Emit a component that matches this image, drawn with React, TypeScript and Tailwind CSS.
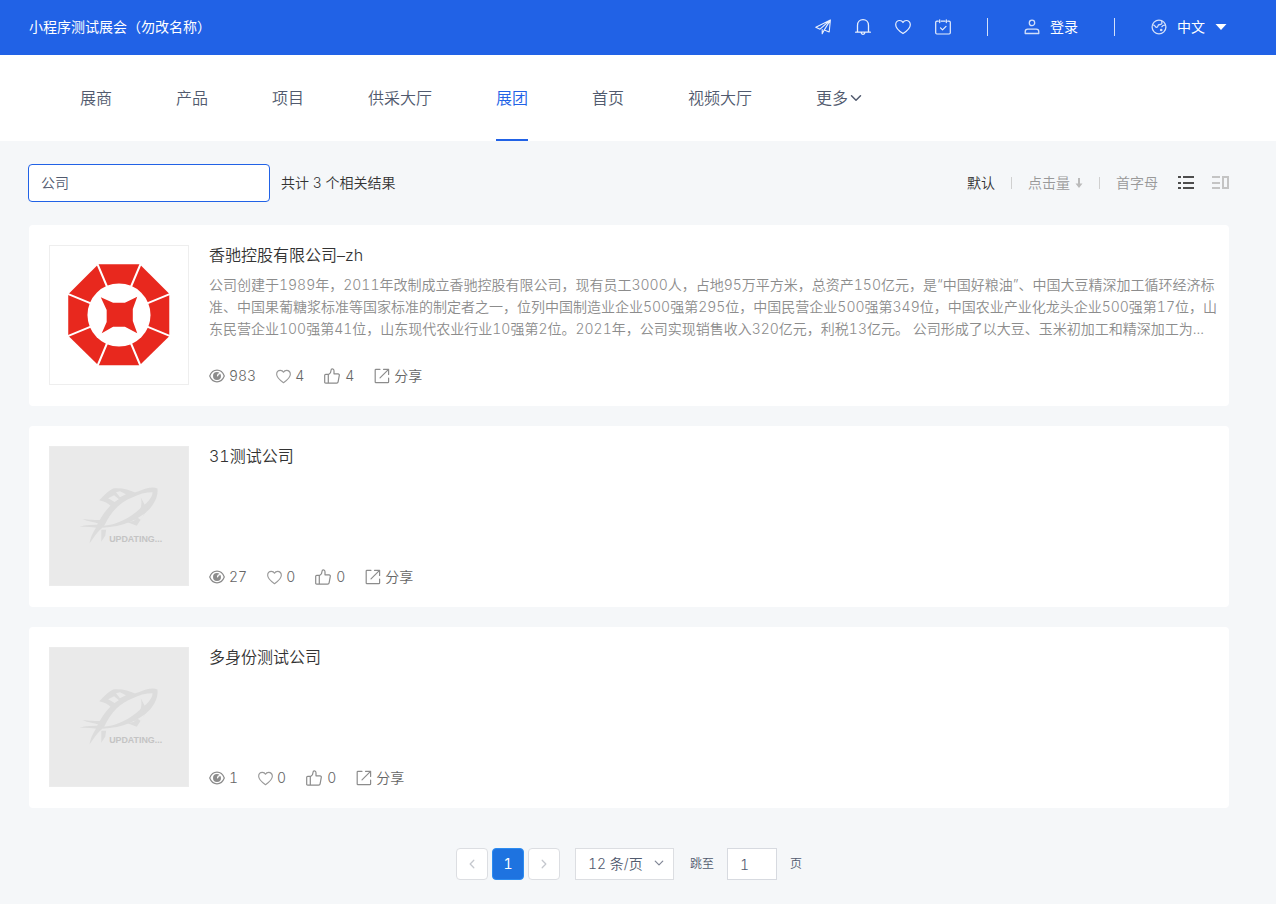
import React, { useState } from 'react';

interface Company {
  id: number;
  name: string;
  intro?: string;
  hasLogo?: boolean;
  views: number;
  favorites: number;
  likes: number;
}

const NAV_ITEMS = ['展商', '产品', '项目', '供采大厅', '展团', '首页', '视频大厅'];

const COMPANIES: Company[] = [
  {
    id: 1,
    name: '香驰控股有限公司–zh',
    intro:
      '公司创建于1989年，2011年改制成立香驰控股有限公司，现有员工3000人，占地95万平方米，总资产150亿元，是“中国好粮油”、中国大豆精深加工循环经济标准、中国果葡糖浆标准等国家标准的制定者之一，位列中国制造业企业500强第295位，中国民营企业500强第349位，中国农业产业化龙头企业500强第17位，山东民营企业100强第41位，山东现代农业行业10强第2位。2021年，公司实现销售收入320亿元，利税13亿元。 公司形成了以大豆、玉米初加工和精深加工为...',
    hasLogo: true,
    views: 983,
    favorites: 4,
    likes: 4,
  },
  { id: 2, name: '31测试公司', views: 27, favorites: 0, likes: 0 },
  { id: 3, name: '多身份测试公司', views: 1, favorites: 0, likes: 0 },
];

interface IconProps {
  className?: string;
}

const strokeProps = {
  fill: 'none',
  stroke: 'currentColor',
  strokeLinecap: 'round' as const,
  strokeLinejoin: 'round' as const,
};

const PlaneIcon: React.FC<IconProps> = ({ className }) => (
  <svg viewBox="0 0 16 16" className={className} {...strokeProps} strokeWidth="1.1">
    <path d="M15.4 1 0.8 8.3l4.2 1.9L15.4 1ZM15.4 1l-1.2 12-5-1.9L15.4 1M7.2 10.6v4.2l2-3.7" />
  </svg>
);

const BellIcon: React.FC<IconProps> = ({ className }) => (
  <svg viewBox="0 0 16 16" className={className} {...strokeProps} strokeWidth="1.3">
    <path d="M2.5 13.2V6.4C2.5 3 4.9 0.7 8 0.7s5.5 2.3 5.5 5.7v6.8M0.6 13.2h14.8M6.3 14c.3 1 .9 1.3 1.7 1.3s1.4-.3 1.7-1.3" />
  </svg>
);

const HeartIcon: React.FC<IconProps> = ({ className }) => (
  <svg viewBox="0 0 16 16" className={className} {...strokeProps} strokeWidth="1.2">
    <path d="M8 14.6C5.3 12.8 0.7 9.5 0.7 5.7 0.7 3.3 2.5 1.5 4.7 1.5c1.5 0 2.7.8 3.3 2 .6-1.2 1.8-2 3.3-2 2.2 0 4 1.8 4 4.2 0 3.8-4.6 7.1-7.3 8.9Z" />
  </svg>
);

const CalendarIcon: React.FC<IconProps> = ({ className }) => (
  <svg viewBox="0 0 16 16" className={className} {...strokeProps} strokeWidth="1.2">
    <path d="M3.3 2.2H1.9c-.7 0-1.2.5-1.2 1.2v10.4c0 .7.5 1.2 1.2 1.2h12.2c.7 0 1.2-.5 1.2-1.2V3.4c0-.7-.5-1.2-1.2-1.2h-1.4M6.3 2.2h3.6M4.7.8v2.8M11.3.8v2.8M5.5 8.8l2 2L11 7.3" />
  </svg>
);

const UserIcon: React.FC<IconProps> = ({ className }) => (
  <svg viewBox="0 0 16 16" className={className} {...strokeProps} strokeWidth="1.3">
    <circle cx="8" cy="3.9" r="2.7" />
    <path d="M1.2 14.5v-1.7c0-1.5 1-2.6 2.6-2.6h8.4c1.6 0 2.6 1.1 2.6 2.6v1.7H1.2Z" />
  </svg>
);

const GlobeIcon: React.FC<IconProps> = ({ className }) => (
  <svg viewBox="0 0 16 16" className={className} {...strokeProps} strokeWidth="1.3">
    <circle cx="8" cy="8" r="6.9" />
    <path d="M1.5 5.8c1.6 0 2.3.5 2.8 1.6.8 1.5 2.5 1.1 2.6-.4.1-1.2 1-1.5 2.2-1.5 1.7 0 2.2-1.1 1.6-2.8M14.5 6.2c-1.5-.2-2.9.3-3.6 1.5" />
    <circle cx="10.2" cy="11" r="1.3" fill="currentColor" stroke="none" />
  </svg>
);

const ChevronIcon: React.FC<IconProps> = ({ className }) => (
  <svg viewBox="0 0 12 12" className={className} {...strokeProps} strokeWidth="1.5">
    <path d="m1.5 3.8 4.5 4.4 4.5-4.4" />
  </svg>
);

const EyeIcon: React.FC<IconProps> = ({ className }) => (
  <svg viewBox="0 0 16 16" className={className} {...strokeProps} strokeWidth="1.2">
    <path d="M0.7 8C2.2 4.1 4.8 2.2 8 2.2S13.8 4.1 15.3 8c-1.5 3.9-4.1 5.8-7.3 5.8S2.2 11.9 0.7 8Z" />
    <path d="M8 4a4 4 0 1 0 4 4H9.5A1.5 1.5 0 0 1 8 6.5ZM8 4v2.5L9.5 8H12c0-2.2-1.8-4-4-4Z" fill="currentColor" stroke="none" />
    <path d="M8.6 7.8c.1-1.400.8-2 2-2.100" stroke="#fff" strokeWidth="1.3" />
  </svg>
);

const ThumbIcon: React.FC<IconProps> = ({ className }) => (
  <svg viewBox="0 0 16 16" className={className} {...strokeProps} strokeWidth="1.2">
    <path d="M4.3 15.2H1.7c-.6 0-1-.4-1-1V7.3c0-.6.4-1 1-1h2.6v8.9ZM4.3 6.3h.6C6.4 5.5 7 4.3 7 2.5 7 1.4 7.6.8 8.4.8c1 0 1.6.8 1.6 1.9V5.8h4c.9 0 1.5.7 1.3 1.6l-1.2 6.5c-.1.8-.7 1.3-1.5 1.3H4.3" />
  </svg>
);

const ShareIcon: React.FC<IconProps> = ({ className }) => (
  <svg viewBox="0 0 16 16" className={className} {...strokeProps} strokeWidth="1.2">
    <path d="M6 1.3H2c-.5 0-.8.3-.8.8v11.8c0 .5.3.8.8.8h11.8c.5 0 .8-.3.8-.8V10M9.5 1.3h5.1V6.4M14.3 1.6 6 9.9" />
  </svg>
);

// Octagonal brand mark with a star cut into the ring
const CompanyLogo: React.FC = () => (
  <svg viewBox="0 0 140 140" className="h-full w-full" role="img" aria-label="logo">
    <path d="M49 18.5h42l30 30v43l-30 29.5H49L18.5 91V49Z" fill="#e8281e" />
    <path d="M48 18 92 122M92 18 48 122M18 48.5 122 91.5M18 91.5 122 48.5" stroke="#fff" strokeWidth="2" />
    <circle cx="70" cy="70" r="32" fill="#fff" />
    <path d="M51.5 52 64 57.5h12l12.5-6L84 64v12L88.5 88.5 76 82H64L52.5 88.5 57.5 77V65Z" fill="#e8281e" />
  </svg>
);

const UpdatingImage: React.FC = () => (
  <svg viewBox="0 0 140 140" className="h-full w-full" role="img" aria-label="updating">
    <g fill="#dcdcdc">
      <path
        fillRule="evenodd"
        d="M40 98c1-6 3-10 6-15 4-9 9-18 18-26 8-6 17-9 26-12 7-3 14-5 19-3 1 8-3 15-8 21-11 11-27 18-48 19-5 4-8 9-13 16Zm15-18c13-1 26-8 36-17 7-6 13-11 13-17-7 0-14 2-20 5-13 5-22 14-29 29Z"
      />
      <path fillRule="evenodd" d="M50 54c5-5 8-9 14-12 8-1 16 1 24 5l-8 3-17 11c-4-4-8-6-13-7Zm9-2 7 4 4-3-5-4Zm12-1 6-3-6-3-4 1Z" />
      <path d="M92 51c2 7 0 13-4 20l4 3c3-5 6-9 5-14ZM101 60 88 80l-10-4 7-1 9-10Z" />
      <path d="M33 73c7 1 12 1 20 1l-2 4c-6-2-12-2-18-5ZM30 81c6-2 13-2 22-2l-1 4c-7-2-14-2-21-2ZM52 84h5l-1 6-4 6Z" />
    </g>
    <text x="60" y="96" fontSize="9" fontWeight="700" fill="#c4c4c4" fontFamily="'Liberation Sans', sans-serif">
      UPDATING...
    </text>
  </svg>
);

const TopBar: React.FC = () => (
  <header className="flex h-[55px] items-center justify-between bg-[#2162e6] pb-[2px] pl-[29px] pr-[49px] text-sm font-normal text-white">
    <span>小程序测试展会（勿改名称）</span>
    <div className="flex items-center">
      <div className="flex items-center gap-6 text-white/90">
        <button aria-label="消息"><PlaneIcon className="h-4 w-4" /></button>
        <button aria-label="通知"><BellIcon className="h-4 w-4" /></button>
        <button aria-label="收藏"><HeartIcon className="h-4 w-4" /></button>
        <button aria-label="日程"><CalendarIcon className="h-4 w-4" /></button>
      </div>
      <span className="mx-9 h-[18px] w-px bg-white/80" />
      <button className="flex items-center gap-[10px]">
        <UserIcon className="h-4 w-4 opacity-80" />
        登录
      </button>
      <span className="mx-9 h-[18px] w-px bg-white/80" />
      <button className="flex items-center gap-[10px]">
        <GlobeIcon className="h-4 w-4 opacity-80" />
        中文
        <svg viewBox="0 0 12 6" className="h-[6px] w-3" fill="currentColor">
          <path d="M.5 0h11L6 6Z" />
        </svg>
      </button>
    </div>
  </header>
);

const NavBar: React.FC = () => {
  const [active, setActive] = useState('展团');

  return (
    <nav className="flex h-[86px] gap-16 bg-white px-20 text-base text-[#515a6e]">
      {NAV_ITEMS.map(item => (
        <a
          key={item}
          href="#"
          onClick={() => setActive(item)}
          className={`flex items-center border-y-2 border-t-transparent ${
            item === active ? 'border-b-[#2162e6] text-[#2162e6]' : 'border-b-transparent'
          }`}
        >
          {item}
        </a>
      ))}
      <button className="flex items-center gap-[2px]">
        更多
        <ChevronIcon className="h-3 w-3" />
      </button>
    </nav>
  );
};

const Toolbar: React.FC = () => {
  const [keyword, setKeyword] = useState('公司');

  return (
    <div className="flex items-center justify-between text-sm">
      <div className="flex items-center gap-[11px] text-[#333333]">
        <input
          aria-label="搜索"
          value={keyword}
          onChange={e => setKeyword(e.target.value)}
          className="-ml-px h-[38px] w-[242px] rounded border border-[#2162e6] bg-white px-3 pb-[2px] text-[#515a6e] outline-none"
        />
        <span>共计 3 个相关结果</span>
      </div>
      <div className="flex items-center text-[#999999]">
        <button className="text-[#333333]">默认</button>
        <span className="mx-4 h-3 w-px bg-[#d0d0d0]" />
        <button className="flex items-center gap-[5px]">
          点击量
          <svg viewBox="0 0 8 12" className="h-3 w-2" fill="#bbbbbb">
            <path d="M3 1h2v5.5H7.5L4 11 .5 6.5H3Z" />
          </svg>
        </button>
        <span className="mx-4 h-3 w-px bg-[#d0d0d0]" />
        <button>首字母</button>
        <button aria-label="列表" className="ml-5 text-[#4d4d4d]">
          <svg viewBox="0 0 16 14" className="h-[14px] w-4" fill="currentColor">
            <path d="M0 0h3v2H0zM5 0h11v2H5zM0 6h3v2H0zM5 6h11v2H5zM0 11h3v2H0zM5 11h11v2H5z" />
          </svg>
        </button>
        <button aria-label="卡片" className="ml-[18px] text-[#c4c4c4]">
          <svg viewBox="0 0 17 14" className="h-[14px] w-[17px]" fill="currentColor">
            <path d="M0 0h8v2H0zM0 6h8v2H0zM0 11h8v2H0z" />
            <path fillRule="evenodd" d="M10 0h7v13h-7ZM12 2v9h3V2Z" />
          </svg>
        </button>
      </div>
    </div>
  );
};

const CompanyCard: React.FC<{ company: Company }> = ({ company }) => (
  <article className="flex gap-5 rounded bg-white p-5">
    <div
      className={`h-[140px] w-[140px] shrink-0 border ${
        company.hasLogo ? 'border-[#eeeeee]' : 'border-[#ececec] bg-[#eaeaea]'
      }`}
    >
      {company.hasLogo ? <CompanyLogo /> : <UpdatingImage />}
    </div>
    <div className="flex min-h-[141px] min-w-0 flex-1 flex-col">
      <h2 className="text-base leading-5 text-[#333333]">
        <a href="#">{company.name}</a>
      </h2>
      {company.intro && (
        <p className="-mr-2 mt-[9px] text-sm leading-[22px] text-[#8c8c8c]">{company.intro}</p>
      )}
      <div className="mt-auto flex items-center gap-5 text-sm text-[#666666]">
        <span className="flex items-center gap-1">
          <EyeIcon className="h-4 w-4 text-[#8c8c8c]" />
          {company.views}
        </span>
        <button className="flex items-center gap-1">
          <HeartIcon className="h-[15px] w-[15px] text-[#999999]" />
          {company.favorites}
        </button>
        <button className="flex items-center gap-[5px]">
          <ThumbIcon className="h-4 w-4 text-[#8c8c8c]" />
          {company.likes}
        </button>
        <button className="flex items-center gap-1">
          <ShareIcon className="h-4 w-4 text-[#8c8c8c]" />
          分享
        </button>
      </div>
    </div>
  </article>
);

const Pagination: React.FC = () => (
  <div className="flex items-center justify-center text-sm text-[#515a6e]">
    <div className="flex gap-1">
      <button aria-label="上一页" className="flex h-8 w-8 items-center justify-center rounded border border-[#dcdee2] bg-white text-[#c5c8ce]">
        <ChevronIcon className="h-[10px] w-[10px] rotate-90" />
      </button>
      <button className="h-8 w-8 rounded border border-[#2d8cf0] bg-[#1e73e0] font-normal text-white">1</button>
      <button aria-label="下一页" className="flex h-8 w-8 items-center justify-center rounded border border-[#dcdee2] bg-white text-[#c5c8ce]">
        <ChevronIcon className="h-[10px] w-[10px] -rotate-90" />
      </button>
    </div>
    <div className="relative ml-[15px]">
      <select aria-label="每页条数" className="h-8 w-[99px] appearance-none border border-[#dcdee2] bg-white pl-3 outline-none">
        <option>12 条/页</option>
        <option>24 条/页</option>
        <option>48 条/页</option>
      </select>
      <ChevronIcon className="pointer-events-none absolute right-[10px] top-[10px] h-[10px] w-[10px] text-[#808695]" />
    </div>
    <label className="ml-4 flex items-center gap-[13px] text-xs">
      跳至
      <input defaultValue="1" className="h-8 w-[50px] border border-[#d7dae0] bg-white px-3 text-sm outline-none" />
      页
    </label>
  </div>
);

export default function App() {
  return (
    <div className="min-h-screen bg-[#f5f7f9] font-['Inter','Noto_Sans_CJK_SC',sans-serif] font-[350] tabular-nums">
      <TopBar />
      <NavBar />
      <main className="pb-6 pl-[29px] pr-[47px] pt-[23px]">
        <Toolbar />
        <div className="mt-[23px] space-y-5">
          {COMPANIES.map(company => (
            <CompanyCard key={company.id} company={company} />
          ))}
        </div>
        <div className="mt-10">
          <Pagination />
        </div>
      </main>
    </div>
  );
}
